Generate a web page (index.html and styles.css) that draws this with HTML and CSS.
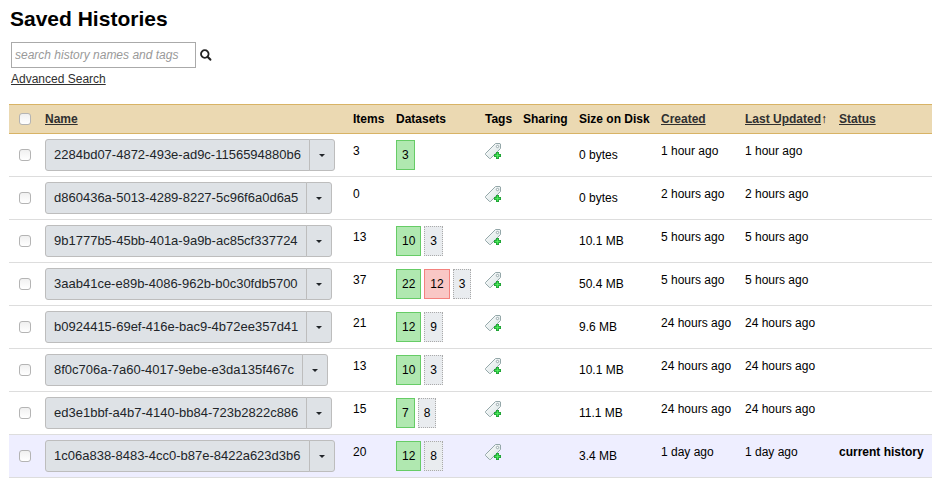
FILE: index.html
```html
<!DOCTYPE html>
<html lang="en">
<head>
<meta charset="utf-8">
<title>Saved Histories</title>
<link rel="stylesheet" href="styles.css">
</head>
<body>
<svg class="defs" aria-hidden="true">
  <defs>
    <linearGradient id="tag-fill" x1="0" y1="0" x2="1" y2="1">
      <stop offset="0" stop-color="#ffffff"/>
      <stop offset="1" stop-color="#d5e1e2"/>
    </linearGradient>
    <symbol id="tag-add" viewBox="0 0 16 16">
      <path d="M10.500 .5H15L15.500 1V5.500L5.500 15.500H4.500L.5 11.500V10.500Z" fill="url(#tag-fill)" stroke="#94a7a9"/>
      <circle cx="12.500" cy="3.500" r="1.200" fill="#fff" stroke="#8fa2a4" stroke-width=".9"/>
      <path d="M11 9h3v2h2v3h-2v2h-3v-2h-2v-3h2z" fill="#1fa035"/>
      <path d="M12 10h1v2h2v1h-2v2h-1v-2h-2v-1h2z" fill="#55f062" stroke="#3ad04c" stroke-width=".5"/>
    </symbol>
  </defs>
</svg>
<main>
  <h1>Saved Histories</h1>
  <form class="search">
    <input class="search-box" type="text" placeholder="search history names and tags" aria-label="Search histories">
    <button class="search-go" type="button" aria-label="Search">
      <svg width="12" height="12" viewBox="0 0 12 12"><circle cx="4.800" cy="5" r="3.800" fill="none" stroke="#222" stroke-width="1.800"/><path d="M7.800 8l2.500 2.600" stroke="#222" stroke-width="2.200" stroke-linecap="round"/></svg>
    </button>
  </form>
  <a class="advanced" href="#">Advanced Search</a>
  <table class="grid">
    <colgroup>
      <col class="c-check"><col class="c-name"><col class="c-items"><col class="c-data"><col class="c-tags"><col class="c-share"><col class="c-size"><col class="c-created"><col class="c-updated"><col>
    </colgroup>
    <thead>
      <tr>
        <th><input type="checkbox" aria-label="Select all"></th>
        <th><a href="#">Name</a></th>
        <th>Items</th>
        <th>Datasets</th>
        <th>Tags</th>
        <th>Sharing</th>
        <th>Size on Disk</th>
        <th><a href="#">Created</a></th>
        <th><a href="#">Last Updated</a><span class="sort">↑</span></th>
        <th><a href="#">Status</a></th>
      </tr>
    </thead>
    <tbody id="rows"></tbody>
  </table>
</main>
<script src="grid.js"></script>
</body>
</html>
```
FILE: styles.css
```css
* { box-sizing: border-box; }

body {
  margin: 0;
  background: #fff;
  color: #000;
  font: 12px/18px "Liberation Sans", Arial, sans-serif;
}

.defs { position: absolute; width: 0; height: 0; }

main { padding: 6px 12px 0 9px; }

h1 {
  margin: 0 0 10px 1px;
  font-size: 21px;
  line-height: 26px;
}

a { color: #303030; text-decoration: underline; }

.search {
  display: flex;
  align-items: center;
  gap: 4px;
  margin-left: 2px;
}

.search-box {
  width: 185px;
  height: 26px;
  padding: 0 3px;
  border: 1px solid #aaa;
  background: #fff;
  color: #000;
  font: inherit;
}

.search-box::placeholder { color: #999; font-style: italic; opacity: 1; }

.search-go {
  display: flex;
  padding: 0;
  border: 0;
  background: none;
}

.advanced { display: block; width: max-content; margin: 2px 0 16px 2px; }

.grid {
  width: 100%;
  table-layout: fixed;
  border-collapse: separate;
  border-spacing: 0;
}

.c-check { width: 30px; }
.c-name { width: 308px; }
.c-items { width: 43px; }
.c-data { width: 89px; }
.c-tags { width: 38px; }
.c-share { width: 56px; }
.c-size { width: 82px; }
.c-created { width: 84px; }
.c-updated { width: 94px; }

th {
  height: 30px;
  padding: 0 0 0 6px;
  border: solid #d8b365;
  border-width: 1px 0;
  background: #ebd9b2;
  text-align: left;
  white-space: nowrap;
}

.sort { font-weight: normal; }

td {
  height: 43px;
  padding: 5px 0 5px 6px;
  border-bottom: 1px solid #ddd;
  vertical-align: top;
  white-space: nowrap;
}

td.middle { vertical-align: middle; }
td.text { padding-top: 8px; }

.current td { background: #eeeeff; }

input[type="checkbox"] {
  display: block;
  appearance: none;
  width: 12px;
  height: 12px;
  margin: 0 0 0 4px;
  border: 1px solid #b4b4b4;
  border-radius: 3px;
  background: linear-gradient(#f0f0f0, #fff);
}

.split { display: flex; width: max-content; }

.split button {
  height: 32px;
  padding: 0 8px;
  border: 1px solid #bdbdbd;
  background: #dee2e6;
  color: #212529;
  font: inherit;
  font-size: 13px;
}

.split .open { border-radius: 3px 0 0 3px; }

.split .more {
  display: flex;
  align-items: center;
  justify-content: center;
  width: 26px;
  margin-left: -1px;
  padding: 0;
  border-radius: 0 3px 3px 0;
}

.caret {
  border: solid transparent;
  border-width: 3px 3px 0;
  border-top-color: #212529;
}

.states { display: flex; gap: 3px; }

.state {
  height: 30px;
  margin-top: 1px;
  padding: 0 5px;
  border: 1px solid;
  line-height: 28px;
}

.ok { background: #b0e8b0; border-color: #66cc66; }
.error { background: #f9c7c5; border-color: #f4827e; }
.deleted { background: #e9ecef; border: 1px dotted #aaa; }

.tag {
  display: block;
  width: 16px;
  height: 16px;
  margin: 4px 0 0;
  padding: 0;
  border: 0;
  background: none;
}

.tag svg { display: block; width: 16px; height: 16px; }
```
FILE: grid.js
```js
const histories = [
  ["2284bd07-4872-493e-ad9c-1156594880b6", 3, { ok: 3 }, "0 bytes", "1 hour ago"],
  ["d860436a-5013-4289-8227-5c96f6a0d6a5", 0, {}, "0 bytes", "2 hours ago"],
  ["9b1777b5-45bb-401a-9a9b-ac85cf337724", 13, { ok: 10, deleted: 3 }, "10.1 MB", "5 hours ago"],
  ["3aab41ce-e89b-4086-962b-b0c30fdb5700", 37, { ok: 22, error: 12, deleted: 3 }, "50.4 MB", "5 hours ago"],
  ["b0924415-69ef-416e-bac9-4b72ee357d41", 21, { ok: 12, deleted: 9 }, "9.6 MB", "24 hours ago"],
  ["8f0c706a-7a60-4017-9ebe-e3da135f467c", 13, { ok: 10, deleted: 3 }, "10.1 MB", "24 hours ago"],
  ["ed3e1bbf-a4b7-4140-bb84-723b2822c886", 15, { ok: 7, deleted: 8 }, "11.1 MB", "24 hours ago"],
  ["1c06a838-8483-4cc0-b87e-8422a623d3b6", 20, { ok: 12, deleted: 8 }, "3.4 MB", "1 day ago", "current history"]
];

document.getElementById("rows").innerHTML = histories.map(([name, items, states, size, time, status]) => `
  <tr class="${status ? "current" : ""}">
    <td class="middle"><input type="checkbox" aria-label="Select ${name}"></td>
    <td><div class="split"><button class="open" type="button">${name}</button><button class="more" type="button" aria-label="Options"><span class="caret"></span></button></div></td>
    <td class="text">${items}</td>
    <td><div class="states">${Object.entries(states).map(([s, n]) => `<span class="state ${s}">${n}</span>`).join("")}</div></td>
    <td><button class="tag" type="button" aria-label="Add tags"><svg><use href="#tag-add"/></svg></button></td>
    <td></td>
    <td class="middle">${size}</td>
    <td class="text">${time}</td>
    <td class="text">${time}</td>
    <td class="text"><strong>${status || ""}</strong></td>
  </tr>`).join("");
```
